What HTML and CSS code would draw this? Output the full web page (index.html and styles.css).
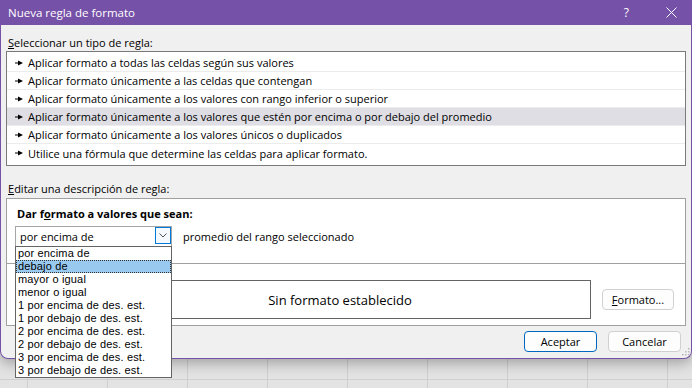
FILE: index.html
```html
<!DOCTYPE html>
<html lang="es">
<head>
  <meta charset="UTF-8">
  <title>Nueva regla de formato</title>
  <link rel="stylesheet" href="styles.css">
</head>
<body>
  <div class="dialog">
    <div class="titlebar">
      <span class="title">Nueva regla de formato</span>
      <div class="title-buttons">
        <span class="help">?</span>
        <svg class="close" width="11" height="11" viewBox="0 0 11 11">
          <path d="M0.5 0.5L10.5 10.5M10.5 0.5L0.5 10.5" stroke="#fff" stroke-width="1"/>
        </svg>
      </div>
    </div>

    <div class="content">
      <div class="label"><u>S</u>eleccionar un tipo de regla:</div>
      <ul class="rule-list">
        <li><svg class="arrow" width="8" height="6" viewBox="0 0 8 6"><path d="M0 3h4" stroke="#000" stroke-width="1"/><polygon points="3,0.5 8,3 3,5.5" fill="#000"/></svg>Aplicar formato a todas las celdas según sus valores</li>
        <li><svg class="arrow" width="8" height="6" viewBox="0 0 8 6"><path d="M0 3h4" stroke="#000" stroke-width="1"/><polygon points="3,0.5 8,3 3,5.5" fill="#000"/></svg>Aplicar formato únicamente a las celdas que contengan</li>
        <li><svg class="arrow" width="8" height="6" viewBox="0 0 8 6"><path d="M0 3h4" stroke="#000" stroke-width="1"/><polygon points="3,0.5 8,3 3,5.5" fill="#000"/></svg>Aplicar formato únicamente a los valores con rango inferior o superior</li>
        <li class="selected"><svg class="arrow" width="8" height="6" viewBox="0 0 8 6"><path d="M0 3h4" stroke="#000" stroke-width="1"/><polygon points="3,0.5 8,3 3,5.5" fill="#000"/></svg>Aplicar formato únicamente a los valores que estén por encima o por debajo del promedio</li>
        <li><svg class="arrow" width="8" height="6" viewBox="0 0 8 6"><path d="M0 3h4" stroke="#000" stroke-width="1"/><polygon points="3,0.5 8,3 3,5.5" fill="#000"/></svg>Aplicar formato únicamente a los valores únicos o duplicados</li>
        <li><svg class="arrow" width="8" height="6" viewBox="0 0 8 6"><path d="M0 3h4" stroke="#000" stroke-width="1"/><polygon points="3,0.5 8,3 3,5.5" fill="#000"/></svg>Utilice una fórmula que determine las celdas para aplicar formato.</li>
      </ul>

      <div class="label label-edit"><u>E</u>ditar una descripción de regla:</div>
      <div class="desc-box">
        <div class="desc-heading">Dar f<u>o</u>rmato a valores que sean:</div>
        <div class="combo-row">
          <div class="combo">
            <span class="combo-value">por encima de</span>
            <span class="combo-button">
              <svg width="8" height="5" viewBox="0 0 8 5"><path d="M0.5 0.5L4 4L7.5 0.5" fill="none" stroke="#555" stroke-width="1"/></svg>
            </span>
          </div>
          <span class="combo-text">promedio del rango seleccionado</span>
        </div>
        <div class="separator"></div>
        <div class="preview-row">
          <span class="preview-label"></span>
          <div class="preview-box">Sin formato establecido</div>
          <button class="btn btn-format"><u>F</u>ormato...</button>
        </div>
      </div>

      <div class="buttons">
        <button class="btn btn-primary">Aceptar</button>
        <button class="btn">Cancelar</button>
      </div>
    </div>

    <svg class="grip" width="8" height="8" viewBox="0 0 8 8">
      <rect x="6" y="0" width="1.5" height="1.5" fill="#b8b8b8"/>
      <rect x="3" y="3" width="1.5" height="1.5" fill="#b8b8b8"/>
      <rect x="6" y="3" width="1.5" height="1.5" fill="#b8b8b8"/>
      <rect x="0" y="6" width="1.5" height="1.5" fill="#b8b8b8"/>
      <rect x="3" y="6" width="1.5" height="1.5" fill="#b8b8b8"/>
      <rect x="6" y="6" width="1.5" height="1.5" fill="#b8b8b8"/>
    </svg>
  </div>

  <ul class="dropdown">
    <li>por encima de</li>
    <li class="active">debajo de</li>
    <li>mayor o igual</li>
    <li>menor o igual</li>
    <li>1 por encima de des. est.</li>
    <li>1 por debajo de des. est.</li>
    <li>2 por encima de des. est.</li>
    <li>2 por debajo de des. est.</li>
    <li>3 por encima de des. est.</li>
    <li>3 por debajo de des. est.</li>
  </ul>
</body>
</html>
```

FILE: styles.css
```css
* {
  box-sizing: border-box;
}
body {
  margin: 0;
  width: 692px;
  height: 388px;
  overflow: hidden;
  position: relative;
  font-family: "Open Sans", "Noto Sans", sans-serif;
  font-size: 11px;
  color: #000;
  background-color: #e3e3e3;
  background-image:
    linear-gradient(#cfcfcf, #cfcfcf),
    repeating-linear-gradient(90deg, transparent 0, transparent 27px, #cfcfcf 27px, #cfcfcf 28px, transparent 28px, transparent 80px);
  background-size: 100% 1px, 100% 100%;
  background-position: 0 379px, 0 0;
  background-repeat: no-repeat, repeat;
}
.dialog {
  position: relative;
  width: 692px;
  height: 359px;
  background: #f0f0f0;
  border: 1px solid #7651a8;
  border-top: none;
  border-radius: 0 0 8px 8px;
  box-shadow: 0 4px 14px rgba(0, 0, 0, 0.3);
}
.titlebar {
  height: 25px;
  margin: 0 -1px;
  background: #7651a8;
  color: #fff;
  display: flex;
  align-items: center;
  justify-content: space-between;
  padding: 0 15px 0 8px;
}
.title {
  font-size: 11.5px;
}
.title-buttons {
  display: flex;
  align-items: center;
  gap: 37px;
}
.help {
  font-size: 12px;
}
.content {
  padding: 0 5px;
}
.label {
  margin-top: 10px;
  padding-left: 2px;
  line-height: 16px;
  height: 16px;
}
.label-edit {
  margin-top: 15px;
  margin-bottom: 1px;
}
.rule-list {
  list-style: none;
  margin: 0;
  padding: 2px 0 3px;
  background: #fff;
  border: 1px solid #7a7a7a;
}
.rule-list li {
  height: 18px;
  line-height: 17px;
  border-bottom: 1px solid #ececec;
  padding-left: 8px;
  display: flex;
  align-items: center;
  white-space: nowrap;
}
.rule-list li:last-child {
  border-bottom: none;
}
.rule-list li.selected {
  background: #dedee4;
}
.arrow {
  margin-right: 5px;
  flex-shrink: 0;
}
.desc-box {
  height: 128px;
  background: #fff;
  border: 1px solid #a0a0a0;
  padding-top: 7px;
}
.desc-heading {
  font-weight: bold;
  padding-left: 10px;
  line-height: 16px;
}
.combo-row {
  margin-top: 4px;
  padding-left: 8px;
  display: flex;
  align-items: center;
}
.combo {
  width: 157px;
  height: 21px;
  border: 1px solid #a6a6a6;
  display: flex;
  align-items: flex-start;
  justify-content: space-between;
}
.combo-value {
  padding-left: 4px;
  line-height: 19px;
}
.combo-button {
  width: 16px;
  height: 17px;
  border: 1px solid #0078d7;
  background: #f4f9fe;
  display: flex;
  align-items: center;
  justify-content: center;
}
.combo-text {
  margin-left: 11px;
}
.separator {
  margin-top: 16px;
  border-top: 1px solid #a0a0a0;
}
.preview-row {
  margin-top: 16px;
  padding: 0 11px 0 10px;
  display: flex;
  align-items: center;
  gap: 11px;
}
.preview-label {
  width: 61px;
}
.preview-box {
  flex: 1;
  height: 39px;
  border: 1px solid #646464;
  display: flex;
  align-items: center;
  justify-content: center;
  font-size: 13px;
}
.btn {
  font-family: inherit;
  font-size: 11px;
  color: #000;
  height: 21px;
  width: 73px;
  padding: 0;
  background: #fdfdfd;
  border: 1px solid #d0d0d0;
  border-radius: 4px;
}
.btn-format {
  width: 72px;
}
.btn-primary {
  border-color: #0067c0;
}
.buttons {
  margin-top: 5px;
  padding-right: 5px;
  display: flex;
  justify-content: flex-end;
  gap: 11px;
}
.grip {
  position: absolute;
  right: 1px;
  bottom: 2px;
}
.dropdown {
  position: absolute;
  left: 15px;
  top: 246px;
  width: 157px;
  margin: 0;
  padding: 0;
  list-style: none;
  background: #fff;
  border: 1px solid #646464;
  font-family: "Liberation Sans", Arial, sans-serif;
  font-size: 11px;
  letter-spacing: 0.15px;
}
.dropdown li {
  height: 13px;
  line-height: 13px;
  padding-left: 2px;
  white-space: nowrap;
}
.dropdown li.active {
  background: #99c9ef;
  outline: 1px dotted #333;
  outline-offset: -1px;
}
```
